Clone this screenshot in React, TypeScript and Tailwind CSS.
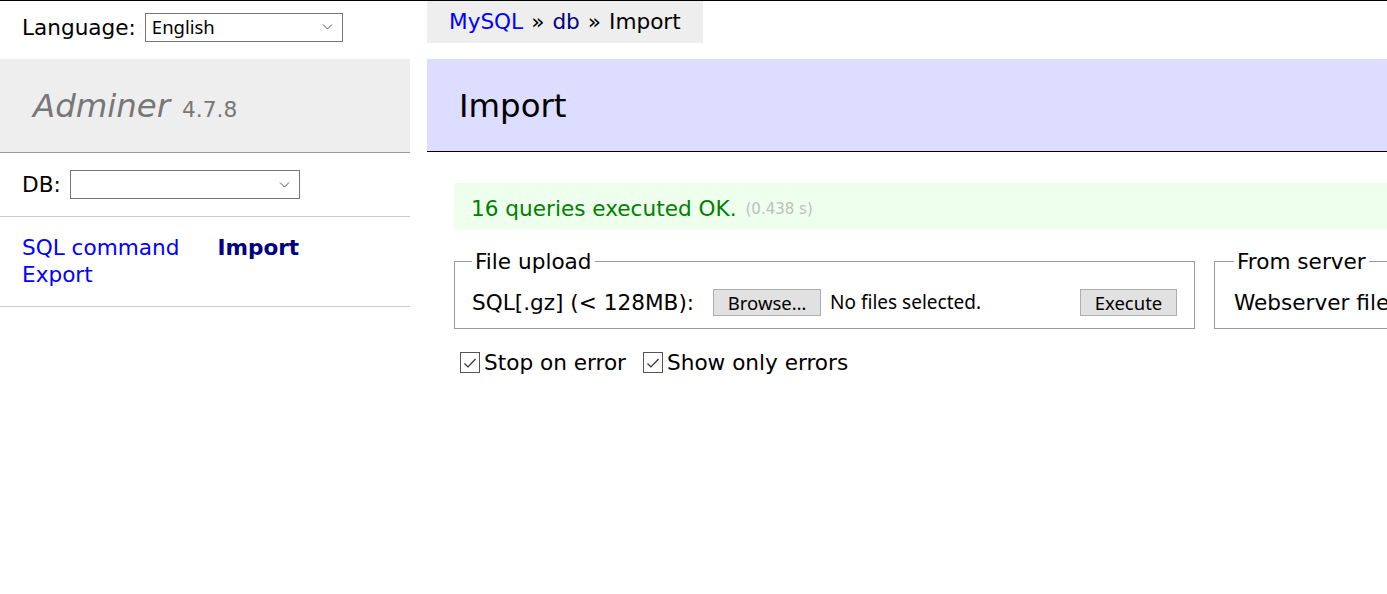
import React from "react";

const verdana = { fontFamily: '"DejaVu Sans", Verdana, sans-serif' };

// kotak select sederhana ala browser
const FakeSelect: React.FC<{ value?: string; className?: string }> = ({ value, className }) => (
  <div
    className={`relative flex items-center border border-[#767676] bg-white text-[18.5px] leading-none text-black font-['Noto_Sans',sans-serif] pl-[6px] ${className ?? ""}`}
  >
    <span>{value}</span>
    <svg className="absolute right-[9px] top-1/2 -translate-y-1/2" width="11" height="7" viewBox="0 0 11 7">
      <path d="M1 1l4.5 4.5L10 1" fill="none" stroke="#555" strokeWidth="1" />
    </svg>
  </div>
);

const Checkbox: React.FC<{ label: string }> = ({ label }) => (
  <label className="flex items-center gap-[4px]">
    <span className="flex items-center justify-center w-[20px] h-[21px] border border-[#555] bg-white">
      <svg width="14" height="12" viewBox="0 0 14 12">
        <path d="M1.5 6.5l3.5 3.5L12.5 2" fill="none" stroke="#333" strokeWidth="1.2" />
      </svg>
    </span>
    <span>{label}</span>
  </label>
);

const Button: React.FC<{ children: React.ReactNode; className?: string }> = ({ children, className }) => (
  <span
    className={`inline-flex items-center justify-center h-[27px] border border-[#adadad] bg-[#e1e1e1] text-[18.5px] text-black font-['Noto_Sans',sans-serif] ${className ?? ""}`}
  >
    {children}
  </span>
);

const App: React.FC = () => {
  return (
    <div
      className="w-[1387px] h-[594px] overflow-hidden bg-white border-t border-black text-black text-[21.6px] leading-[27px] flex"
      style={verdana}
    >
      {/* Menu kiri */}
      <div className="w-[410px] shrink-0 flex flex-col">
        <div className="h-[58px] flex items-center px-[22px] pb-[6px] gap-[9px]">
          <span>Language:</span>
          <FakeSelect value="English" className="w-[198px] h-[29px]" />
        </div>
        <div className="h-[94px] bg-[#eee] border-b border-[#999] flex items-center pl-[33px] pt-[2px]">
          <span className="italic text-[32.4px] text-[#777]">Adminer</span>
          <span className="text-[21.7px] text-[#777] ml-[12px] mt-[6px]">4.7.8</span>
        </div>
        <div className="h-[64px] border-b border-[#ccc] flex items-center px-[22px] gap-[9px]">
          <span>DB:</span>
          <FakeSelect className="w-[230px] h-[29px]" />
        </div>
        <div className="h-[90px] border-b border-[#ccc] px-[22px] pt-[17px]">
          <div className="flex gap-[38px]">
            <span className="text-[blue]">SQL command</span>
            <span className="font-bold text-[navy]">Import</span>
          </div>
          <div className="text-[blue]">Export</div>
        </div>
      </div>

      {/* Konten */}
      <div className="flex-1 min-w-0 pl-[17px] flex flex-col">
        <div className="h-[42px] w-fit bg-[#eee] px-[22px] pb-[2px] flex items-center whitespace-nowrap">
          <span className="text-[blue]">MySQL</span>
          <span className="mx-[8px]">»</span>
          <span className="text-[navy]">db</span>
          <span className="mx-[8px]">»</span>
          <span>Import</span>
        </div>
        <div className="mt-[16px] h-[93px] bg-[#ddf] border-b border-black flex items-center px-[32px] pt-[3px]">
          <h2 className="text-[32.4px] font-normal">Import</h2>
        </div>

        <div className="ml-[27px] flex flex-col">
          <div className="mt-[31px] h-[47px] bg-[#efe] flex items-center pl-[17px] pt-[3px] whitespace-nowrap">
            <span className="text-[green]">16 queries executed OK.</span>
            <span className="text-[15px] text-[silver] ml-[9px] mt-[3px]">(0.438 s)</span>
          </div>

          <div className="mt-[18px] flex gap-[19px] whitespace-nowrap">
            <fieldset className="w-[741px] shrink-0 border border-[#999] px-[17px] pb-[12px]">
              <legend className="px-[3px]">File upload</legend>
              <div className="flex items-center pt-[14px]">
                <span>SQL[.gz] (&lt; 128MB):</span>
                <Button className="ml-[19px] w-[108px]">Browse…</Button>
                <span className="ml-[9px] text-[19px] font-['Noto_Sans',sans-serif]">No files selected.</span>
                <Button className="ml-auto w-[97px]">Execute</Button>
              </div>
            </fieldset>
            <fieldset className="w-[520px] shrink-0 border border-[#999] px-[19px] pb-[12px]">
              <legend className="px-[3px]">From server</legend>
              <div className="flex items-center pt-[14px]">
                <span>Webserver file adminer.sql:</span>
                <Button className="ml-[8px] w-[90px]">Run file</Button>
              </div>
            </fieldset>
          </div>

          <div className="mt-[20px] flex items-center gap-[17px] pl-[6px]">
            <Checkbox label="Stop on error" />
            <Checkbox label="Show only errors" />
          </div>
        </div>
      </div>
    </div>
  );
};

export default App;
